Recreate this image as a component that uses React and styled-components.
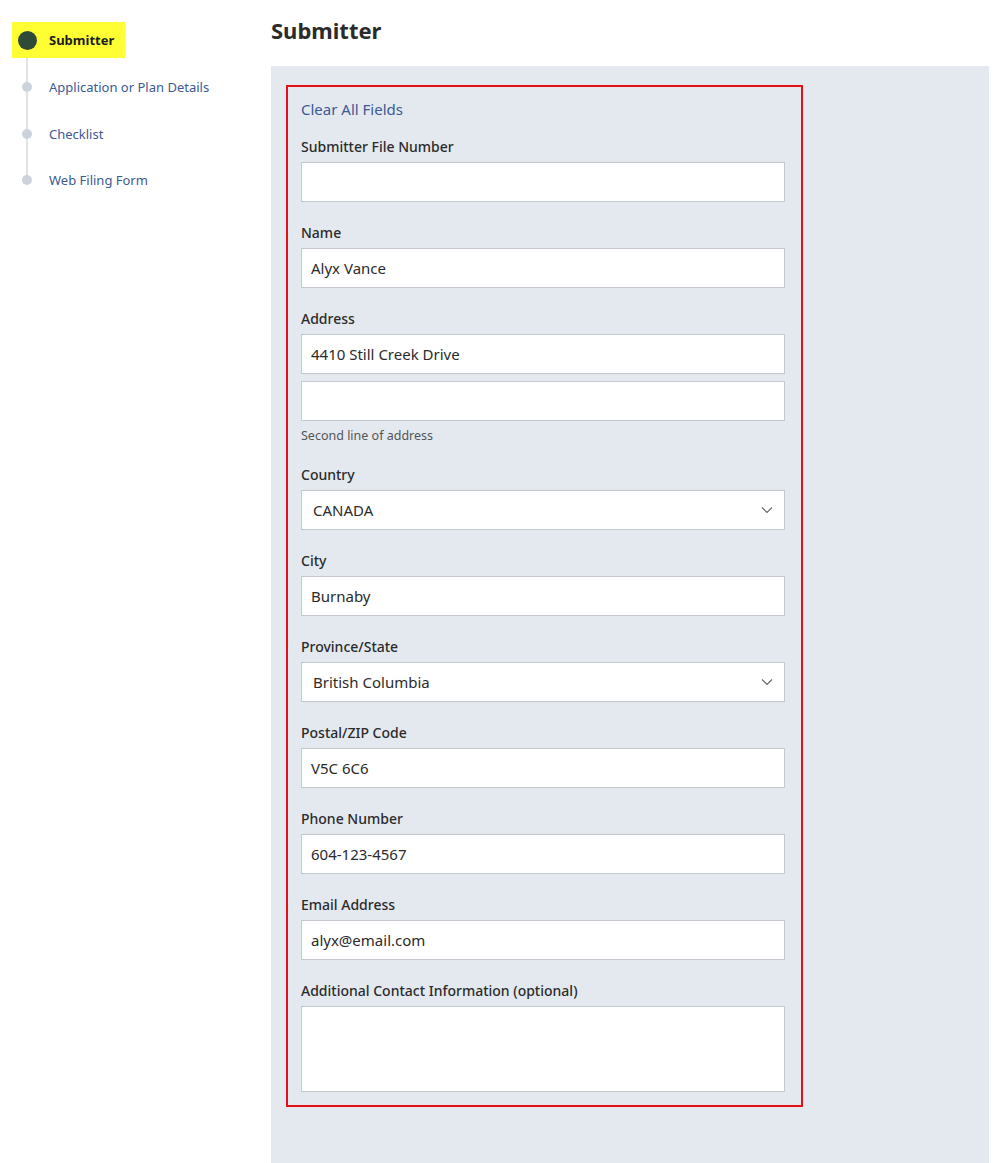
import React from 'react'
import styled, { createGlobalStyle } from 'styled-components'

const Global = createGlobalStyle`
  body { margin: 0; background: #fff; font-family: "Noto Sans", "Open Sans", sans-serif; }
`

const Page = styled.div`
  display: flex;
  width: 1006px;
`

const Sidebar = styled.nav`
  width: 271px;
  flex-shrink: 0;
  padding-top: 22px;
  padding-left: 12px;
  box-sizing: border-box;
`

const Steps = styled.ul`
  list-style: none;
  margin: 0;
  padding: 0;
  position: relative;
  &::before {
    content: '';
    position: absolute;
    left: 14px;
    top: 18px;
    height: 140px;
    width: 2px;
    background: #dfe3e8;
  }
`

const Step = styled.li`
  position: relative;
  display: flex;
  align-items: center;
  gap: ${p => (p.$active ? '12px' : '17px')};
  height: ${p => (p.$active ? '36px' : '46.5px')};
  padding: 0 11px 0 ${p => (p.$active ? '6px' : '10px')};
  width: fit-content;
  background: ${p => (p.$active ? '#ffff33' : 'transparent')};
  font-size: 13px;
  font-weight: ${p => (p.$active ? 700 : 400)};
  color: ${p => (p.$active ? '#1b1b1b' : '#3b5a95')};
  &:nth-child(2) { margin-top: 6px; }
`

const Dot = styled.span`
  width: ${p => (p.$active ? '19px' : '10px')};
  height: ${p => (p.$active ? '19px' : '10px')};
  border-radius: 50%;
  background: ${p => (p.$active ? '#2f4a37' : '#ccd3dc')};
  margin-right: 0;
`

const Main = styled.main`
  width: 718px;
  padding-top: 15px;
`

const Title = styled.h1`
  margin: 0 0 21px;
  font-size: 22px;
  font-weight: 700;
  color: #2b2b2b;
  line-height: 30px;
`

const Panel = styled.section`
  background: #e4e9f0;
  padding: 19px 15px 57px;
`

const Form = styled.div`
  width: 484px;
  border: 2px solid #e3101a;
  padding: 11px 16px 13px 13px;
`

const ClearLink = styled.a`
  display: block;
  font-size: 15px;
  color: #3b5a95;
  margin-bottom: 19px;
  line-height: 22px;
`

const Field = styled.div`
  margin-bottom: 23px;
  &:last-child { margin-bottom: 0; }
`

const Label = styled.label`
  display: block;
  font-size: 14px;
  color: #2b2b2b;
  line-height: 16px;
  margin-bottom: 7px;
  font-weight: 500;
`

const Input = styled.div`
  box-sizing: border-box;
  height: ${p => p.$h || 40}px;
  background: #fff;
  border: 1px solid #c4c9d0;
  display: flex;
  align-items: center;
  justify-content: space-between;
  padding: 0 ${p => (p.$select ? '11px' : '9px')};
  font-size: 15px;
  color: #2b2b2b;
  & + & { margin-top: 7px; }
`

const Hint = styled.div`
  font-size: 12.5px;
  color: #555;
  margin-top: 7px;
  line-height: 16px;
`

const Chevron = () => (
  <svg width="12" height="8" viewBox="0 0 12 8" fill="none" stroke="#666" strokeWidth="1.2">
    <path d="M1 1.5l5 5 5-5" />
  </svg>
)

const steps = ['Application or Plan Details', 'Checklist', 'Web Filing Form']

const fields = [
  ['Name', 'Alyx Vance'],
  ['Country', 'CANADA', true],
  ['City', 'Burnaby'],
  ['Province/State', 'British Columbia', true],
  ['Postal/ZIP Code', 'V5C 6C6'],
  ['Phone Number', '604-123-4567'],
  ['Email Address', 'alyx@email.com'],
]

const Simple = ({ label, value, select }) => (
  <Field>
    <Label>{label}</Label>
    <Input $select={select}>
      {value}
      {select && <Chevron />}
    </Input>
  </Field>
)

export default function App() {
  return (
    <Page>
      <Global />
      <Sidebar>
        <Steps>
          <Step $active>
            <Dot $active />
            Submitter
          </Step>
          {steps.map(s => (
            <Step key={s}>
              <Dot />
              {s}
            </Step>
          ))}
        </Steps>
      </Sidebar>
      <Main>
        <Title>Submitter</Title>
        <Panel>
          <Form>
            <ClearLink>Clear All Fields</ClearLink>
            <Simple label="Submitter File Number" value="" />
            <Simple label={fields[0][0]} value={fields[0][1]} />
            <Field>
              <Label>Address</Label>
              <Input>4410 Still Creek Drive</Input>
              <Input />
              <Hint>Second line of address</Hint>
            </Field>
            {fields.slice(1).map(([l, v, s]) => (
              <Simple key={l} label={l} value={v} select={s} />
            ))}
            <Field>
              <Label>Additional Contact Information (optional)</Label>
              <Input $h={86} />
            </Field>
          </Form>
        </Panel>
      </Main>
    </Page>
  )
}
